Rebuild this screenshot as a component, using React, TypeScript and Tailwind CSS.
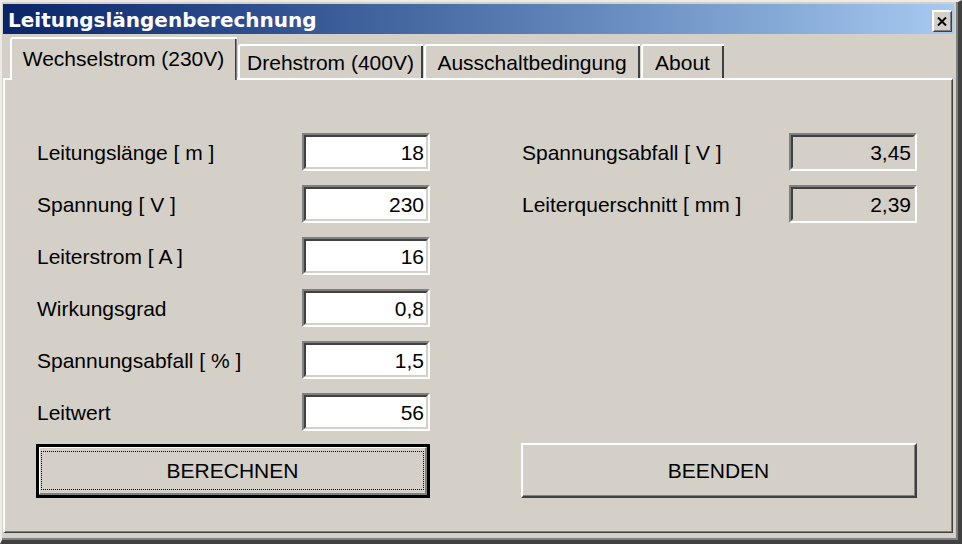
import React from "react";

const font = { fontFamily: '"Liberation Sans", Arial, sans-serif' };

function Sunken({ value, readOnly }: { value: string; readOnly?: boolean }) {
  return (
    <div className="w-[128px] h-[38px] border-2 border-t-[#808080] border-l-[#808080] border-b-white border-r-white">
      <div
        className={`h-full border-2 border-t-[#404040] border-l-[#404040] border-b-[#d4d0c8] border-r-[#d4d0c8] flex items-center justify-end pr-[2px] text-[21px] text-black leading-none ${
          readOnly ? "bg-[#d4d0c8]" : "bg-white"
        }`}
      >
        {value}
      </div>
    </div>
  );
}

function Row({ label, value, readOnly }: { label: string; value: string; readOnly?: boolean }) {
  return (
    <div className="h-[38px] flex items-center justify-between">
      <span className="pl-[1px] text-[21px] text-black leading-none">{label}</span>
      <Sunken value={value} readOnly={readOnly} />
    </div>
  );
}

function Tab({ label, active, w }: { label: string; active?: boolean; w: string }) {
  if (active) {
    return (
      <div
        className={`${w} h-[43px] -mb-[2px] relative z-10 bg-[#d4d0c8] border-t-2 border-l-2 border-white rounded-tl-[3px] flex`}
      >
        <div className="flex-1 border-r-2 border-r-[#808080] flex">
          <div className="flex-1 border-r border-r-[#404040] -mr-[1px] flex items-center justify-center pb-[3px] text-[21px] leading-none text-black">
            {label}
          </div>
        </div>
      </div>
    );
  }
  return (
    <div className={`${w} h-[34px] bg-[#d4d0c8] border-t-2 border-l-2 border-white rounded-tl-[3px] flex`}>
      <div className="flex-1 border-r-2 border-r-[#404040] flex items-center justify-center text-[21px] leading-none text-black">
        {label}
      </div>
    </div>
  );
}

export default function App() {
  return (
    <div className="w-[962px] h-[544px] bg-[#d4d0c8] overflow-hidden" style={font}>
      <div className="w-full h-full border-t-2 border-l-2 border-[#ecebe6] border-r-[4px] border-b-[4px] border-r-[#404040] border-b-[#404040]">
        <div className="w-full h-full border-r-2 border-b-2 border-r-[#808080] border-b-[#808080] pl-[1px] pt-[2px] flex flex-col">
          {/* Title bar */}
          <div className="h-[30px] mr-[2px] bg-linear-to-r from-[#0a246a] to-[#a6caf0] flex items-center justify-between">
            <span
              className="pl-[5px] pt-[1px] text-[20px] font-bold text-white leading-none"
              style={{ fontFamily: '"DejaVu Sans", Verdana, sans-serif' }}
            >
              Leitungslängenberechnung
            </span>
            <div className="self-end mb-[2px] mr-[2px] w-[20px] h-[22px] bg-[#d4d0c8] border-t-2 border-l-2 border-white border-b border-r border-b-[#404040] border-r-[#404040] flex">
              <div className="flex-1 border-b border-r border-b-[#808080] border-r-[#808080] flex items-center justify-center">
                <svg width="10" height="9" viewBox="0 0 10 9">
                  <path d="M1 0.5 L9 8.5 M9 0.5 L1 8.5" stroke="#000" strokeWidth="2" fill="none" />
                </svg>
              </div>
            </div>
          </div>

          {/* Tab strip */}
          <div className="mt-[3px] h-[41px] flex items-end pl-[7px] gap-[1px]">
            <Tab label="Wechselstrom (230V)" active w="w-[227px]" />
            <Tab label="Drehstrom (400V)" w="w-[185px]" />
            <Tab label="Ausschaltbedingung" w="w-[216px]" />
            <Tab label="About" w="w-[83px]" />
          </div>

          {/* Panel */}
          <div className="h-[455px] mr-[3px] border-t-2 border-l-2 border-white border-r border-b border-r-[#404040] border-b-[#404040]">
            <div className="h-full border-r border-b border-r-[#808080] border-b-[#808080] pl-[31px] pt-[53px] pb-[33px] grid grid-cols-[394px_397px] gap-x-[91px]">
              {/* Left column */}
              <div className="flex flex-col">
                <div className="flex flex-col gap-[14px]">
                  <Row label="Leitungslänge [ m ]" value="18" />
                  <Row label="Spannung [ V ]" value="230" />
                  <Row label="Leiterstrom [ A ]" value="16" />
                  <Row label="Wirkungsgrad" value="0,8" />
                  <Row label="Spannungsabfall [ % ]" value="1,5" />
                  <Row label="Leitwert" value="56" />
                </div>
                <div className="mt-auto h-[54px] border-[3px] border-black flex">
                  <div className="flex-1 border-t border-l border-white border-b-2 border-r-2 border-b-[#808080] border-r-[#808080] px-[1px] py-[3px] flex">
                    <div className="flex-1 border border-dotted border-black flex items-center justify-center text-[21px] leading-none text-black">
                      BERECHNEN
                    </div>
                  </div>
                </div>
              </div>

              {/* Right column */}
              <div className="flex flex-col pr-[1px]">
                <div className="flex flex-col gap-[14px]">
                  <Row label="Spannungsabfall [ V ]" value="3,45" readOnly />
                  <Row label="Leiterquerschnitt [ mm ]" value="2,39" readOnly />
                </div>
                <div className="mt-auto h-[55px] border-t-2 border-l-2 border-white border-b-2 border-r-2 border-b-[#404040] border-r-[#404040] flex">
                  <div className="flex-1 border-b border-r border-b-[#808080] border-r-[#808080] flex items-center justify-center text-[21px] leading-none text-black">
                    BEENDEN
                  </div>
                </div>
              </div>
            </div>
          </div>
        </div>
      </div>
    </div>
  );
}
